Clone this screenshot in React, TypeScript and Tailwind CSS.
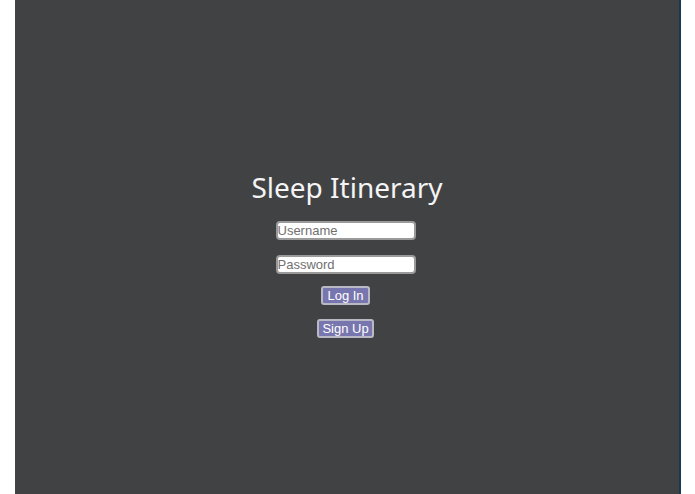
import React from "react";

export default function App() {
  return (
    <div className="flex h-[494px] w-full overflow-hidden bg-white">
      <div className="w-[15px] shrink-0 bg-white" />
      <div className="flex w-[664px] shrink-0 flex-col items-center bg-[#414244] pt-[168px]">
        <h1
          className="text-[28px] leading-[38px] text-[#f4f4f4]"
          style={{ fontFamily: "'Noto Sans', sans-serif" }}
        >
          Sleep Itinerary
        </h1>
        <div
          className="mt-[15px] flex flex-col items-center pr-[3px]"
          style={{ fontFamily: "'Liberation Sans', Arial, sans-serif" }}
        >
          <input
            type="text"
            placeholder="Username"
            className="h-[19px] w-[140px] rounded-[4px] border-2 border-[#9a9a9a] bg-white px-0 text-[13px] text-black placeholder:text-[#707070] outline-none"
          />
          <input
            type="password"
            placeholder="Password"
            className="mt-[15px] h-[19px] w-[140px] rounded-[4px] border-2 border-[#9a9a9a] bg-white px-0 text-[13px] text-black placeholder:text-[#707070] outline-none"
          />
          <button className="mt-[12px] h-[19px] rounded-[3px] border-2 border-[#b9b9c6] bg-[#7876ae] px-[4px] text-[13px] leading-none text-white">
            Log In
          </button>
          <button className="mt-[14px] h-[19px] rounded-[3px] border-2 border-[#b9b9c6] bg-[#7876ae] px-[3px] text-[13px] leading-none text-white">
            Sign Up
          </button>
        </div>
      </div>
      <div className="w-[2px] shrink-0 bg-[#1c3650]" />
      <div className="flex-1 bg-white" />
    </div>
  );
}
